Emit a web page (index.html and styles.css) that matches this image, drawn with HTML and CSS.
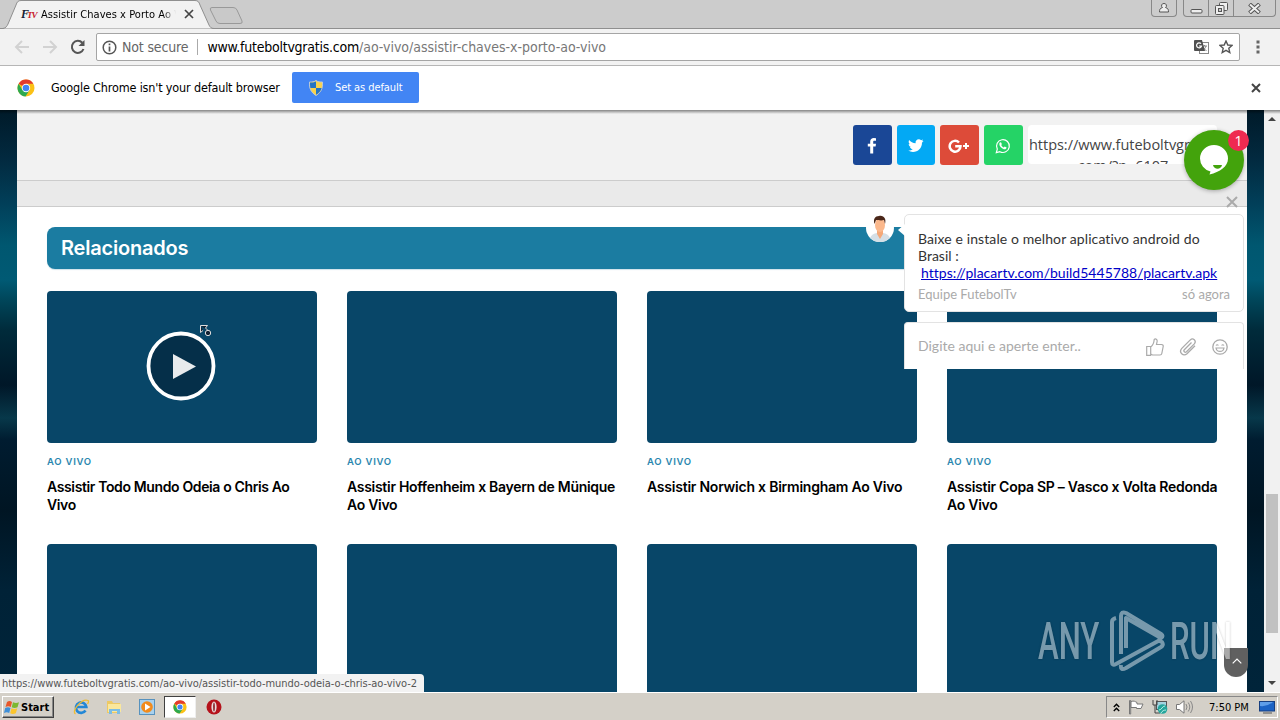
FILE: index.html
```html
<!DOCTYPE html>
<html lang="pt-BR">
<head>
  <meta charset="UTF-8">
  <meta name="viewport" content="width=device-width, initial-scale=1.0">
  <title>Assistir Chaves x Porto Ao Vivo</title>
  <link rel="stylesheet" href="styles.css">
</head>
<body>
  <svg width="0" height="0" class="defs">
    <symbol id="chrome" viewBox="0 0 18 18">
      <circle cx="9" cy="9" r="8.5" fill="#fbc116"/>
      <path d="M9 9L1.6 4.8A8.5 8.5 0 0 1 16.4 4.8L9 4.8z" fill="#e33b2e"/>
      <path d="M1.6 4.8A8.5 8.5 0 0 0 8.5 17.5L12.6 11.1 5.4 11.1z" fill="#2da94f"/>
      <circle cx="9" cy="9" r="4.2" fill="#fff"/>
      <circle cx="9" cy="9" r="3.3" fill="#4285f4"/>
    </symbol>
  </svg>

  <!-- Browser tabs -->
  <div class="tabstrip">
    <svg class="tab-shape" width="250" height="29" viewBox="0 0 250 29">
      <path d="M0 28.5H3C6 28 7 26 8 24L16 5C17 2 18 .5 21 .5H195C198 .5 199 2 200 5L209 25C210 27 211 28.5 214 28.5H250" fill="#f2f2f2" stroke="#8f8f8f"/>
      <path d="M212 7.500H233Q236 7.500 237 10L242 21Q243 23.500 240 23.500H220Q217 23.500 216 21L210.500 10Q209.500 7.500 212 7.500z" fill="#c9c9c9" stroke="#999"/>
    </svg>
    <div class="tab">
      <span class="favicon"><b>F</b><i>TV</i></span>
      <span class="tab-title">Assistir Chaves x Porto Ao V</span>
      <svg width="10" height="10" viewBox="0 0 10 10"><path d="M1 1l8 8M9 1L1 9" stroke="#444" stroke-width="1.7"/></svg>
    </div>
    <div class="window-buttons">
      <div class="win-group">
        <span class="win-btn"><svg width="12" height="12" viewBox="0 0 12 12"><path d="M6 1.500a2.200 2.200 0 0 1 1.500 4c2.500.7 3 2 3 4.500h-9c0-2.500.5-3.800 3-4.500A2.200 2.200 0 0 1 6 1.500z" fill="#eee" stroke="#555"/></svg></span>
      </div>
      <div class="win-group">
        <span class="win-btn"><svg width="13" height="12" viewBox="0 0 13 12"><rect x="1" y="7.500" width="11" height="3.500" rx="1" fill="#eee" stroke="#555"/></svg></span>
        <span class="win-btn"><svg width="13" height="13" viewBox="0 0 13 13"><rect x="4.500" y=".5" width="8" height="8" rx="1" fill="#eee" stroke="#555"/><rect x=".5" y="3.500" width="8.500" height="9" rx="1" fill="#eee" stroke="#555"/><rect x="3.500" y="6.500" width="3" height="3" fill="#ccc" stroke="#555"/></svg></span>
        <span class="win-btn wide"><svg width="13" height="11" viewBox="0 0 13 11"><path d="M1.500 1l10 9M11.500 1l-10 9" stroke="#555" stroke-width="4"/><path d="M2 1.500l9 8M11 1.500l-9 8" stroke="#eee" stroke-width="2"/></svg></span>
      </div>
    </div>
  </div>

  <!-- Address bar -->
  <div class="toolbar">
    <svg width="16" height="16" viewBox="0 0 16 16"><path d="M15 8H2M8 2L2 8l6 6" fill="none" stroke="#d2d2d2" stroke-width="2"/></svg>
    <svg width="16" height="16" viewBox="0 0 16 16"><path d="M1 8h13M8 2l6 6-6 6" fill="none" stroke="#d2d2d2" stroke-width="2"/></svg>
    <svg width="16" height="16" viewBox="0 0 16 16"><path d="M13.500 10A6 6 0 1 1 12.300 3.800" fill="none" stroke="#555" stroke-width="2"/><path d="M14.500 1v6h-6z" fill="#555"/></svg>
    <div class="omnibox">
      <svg width="15" height="15" viewBox="0 0 15 15"><circle cx="7.500" cy="7.500" r="6.300" fill="none" stroke="#555" stroke-width="1.500"/><path d="M7.500 3.500v1.800M7.500 6.500v5" stroke="#555" stroke-width="1.700"/></svg>
      <span class="not-secure">Not secure</span>
      <span class="url-host">www.futeboltvgratis.com</span><span class="url-path">/ao-vivo/assistir-chaves-x-porto-ao-vivo</span>
      <svg class="translate" width="15" height="14" viewBox="0 0 15 14"><rect x="5.500" y="2.500" width="9" height="11" fill="#fff" stroke="#888"/><path d="M8 6h5M10.500 5v1M12 6c-.5 2-2 3.500-3.500 4.500M9 7c1 2 2 3 3.500 3.500" fill="none" stroke="#888"/><path d="M1 0h7l3 11H1a1 1 0 0 1-1-1V1a1 1 0 0 1 1-1z" fill="#505050"/><path d="M7 3.700A2.500 2.500 0 1 0 7.500 6H5" fill="none" stroke="#fff" stroke-width="1.200"/></svg>
      <svg width="14" height="14" viewBox="0 0 14 14"><path d="M7 1l1.800 4 4.200.4-3.200 2.900 1 4.200L7 10.300l-3.800 2.200 1-4.200L1 5.400 5.200 5z" fill="none" stroke="#555" stroke-width="1.400"/></svg>
    </div>
    <svg class="menu-dots" width="4" height="14" viewBox="0 0 4 14"><path d="M.5.500h3v3h-3zM.5 5.500h3v3h-3zM.5 10.500h3v3h-3z" fill="#666"/></svg>
  </div>

  <!-- Default browser prompt -->
  <div class="infobar">
    <svg width="18" height="18"><use href="#chrome"/></svg>
    <span class="infobar-text">Google Chrome isn't your default browser</span>
    <div class="default-btn">
      <svg width="14" height="16" viewBox="0 0 14 16"><path d="M7 .5C9 2 11 2 13.500 2c.3 6-1 10-6.500 13.500C1.500 12 .2 8 .5 2 3 2 5 2 7 .5z" fill="#f9d34c" stroke="#bcc9d8"/><path d="M7 1.500V8H1.400C1 6 1 4.500 1 2.600 3.500 2.600 5 2.500 7 1.500zM7 8h5.600C12 11 10 13 7 14.800z" fill="#2474c4"/></svg>
      <span>Set as default</span>
    </div>
    <svg class="infobar-close" width="10" height="10" viewBox="0 0 10 10"><path d="M1 1l8 8M9 1L1 9" stroke="#444" stroke-width="2"/></svg>
  </div>

  <!-- Page -->
  <div class="viewport">
    <main class="site">
      <div class="share">
        <span class="share-btn facebook"><svg width="10" height="16" viewBox="0 0 10 16"><path d="M9 .3v2.500H7.500C6.400 2.800 6.200 3.300 6.200 4v1.700H9L8.600 8.500H6.200V15.500H3.200V8.500H.8V5.700h2.400V3.600C3.200 1.200 4.700 0 6.800 0z" fill="#fff"/></svg></span>
        <span class="share-btn twitter"><svg width="16" height="14" viewBox="0 0 16 14"><path d="M15.500 1.900c-.5.800-1 1.200-1.500 1.600.1 5.500-4 9.500-9 9.500-1.800 0-3.400-.5-4.700-1.400 1.700.1 3.200-.3 4.500-1.300-1.500-.1-2.500-1-2.900-2.200h1.300C1.700 7.700.7 6.500.7 4.900l1.400.4C.7 4.200.3 2.500 1.100.9c1.600 2 3.800 3.200 6.500 3.300C7.200 2 8.800.3 10.800.3c.9 0 1.700.4 2.300 1l2-.8c-.2.800-.7 1.300-1.300 1.700z" fill="#fff"/></svg></span>
        <span class="share-btn google"><svg width="22" height="14" viewBox="0 0 22 14"><path d="M11 3.500A5.400 5.400 0 1 0 12.500 7.200H7.200" fill="none" stroke="#fff" stroke-width="2.500"/><path d="M18 4v6M15 7h6" stroke="#fff" stroke-width="2"/></svg></span>
        <span class="share-btn whatsapp"><svg width="16" height="16" viewBox="0 0 16 16"><path d="M1.300 14.700l1-3.600A6.400 6.400 0 1 1 4.900 13.700z" fill="none" stroke="#fff" stroke-width="1.200"/><path d="M5 4.500l1-.3.900 2-.7.900c.6 1.200 1.300 1.800 2.600 2.400l.9-1 1.900 1c-.1 1.600-1.500 2-2.700 1.700C6.300 10.500 4.200 8 4.300 6c0-.7.300-1.200.7-1.500z" fill="#fff"/></svg></span>
        <div class="short-url">https://www.futeboltvgratis.<br>com/?p=6107</div>
      </div>
      <div class="divider"></div>
      <section class="related">
        <h2>Relacionados</h2>
        <div class="grid">
          <article class="card">
            <div class="thumb play">
              <svg width="70" height="70" viewBox="0 0 70 70"><circle cx="35" cy="35" r="32.500" fill="#052f49" stroke="#fff" stroke-width="3.800"/><path d="M27 23l23 12.500L27 48z" fill="#e8ebed"/></svg>
            </div>
            <span class="category">AO VIVO</span>
            <h3 class="t1">Assistir Todo Mundo Odeia o Chris Ao<br>Vivo</h3>
          </article>
          <article class="card">
            <div class="thumb"></div>
            <span class="category">AO VIVO</span>
            <h3 class="t2">Assistir Hoffenheim x Bayern de Münique<br>Ao Vivo</h3>
          </article>
          <article class="card">
            <div class="thumb"></div>
            <span class="category">AO VIVO</span>
            <h3 class="t3">Assistir Norwich x Birmingham Ao Vivo</h3>
          </article>
          <article class="card">
            <div class="thumb"></div>
            <span class="category">AO VIVO</span>
            <h3 class="t4">Assistir Copa SP – Vasco x Volta Redonda<br>Ao Vivo</h3>
          </article>
          <article class="card"><div class="thumb"></div></article>
          <article class="card"><div class="thumb"></div></article>
          <article class="card"><div class="thumb"></div></article>
          <article class="card"><div class="thumb"></div></article>
        </div>
      </section>
    </main>
    <div class="scrollbar">
      <svg width="8" height="4" viewBox="0 0 8 4"><path d="M0 4l4-4 4 4z" fill="#444"/></svg>
      <div class="scroll-thumb"></div>
      <svg width="8" height="4" viewBox="0 0 8 4"><path d="M0 0l4 4 4-4z" fill="#444"/></svg>
    </div>

    <!-- Chat widget -->
    <div class="chat-launcher">
      <svg width="30" height="32" viewBox="0 0 30 32"><path d="M15 1a14 13.500 0 0 1 14 13.500c0 8-8 13.500-18.500 16l1-3A14 13.500 0 0 1 1 14.500 14 13.500 0 0 1 15 1z" fill="#fff"/><path d="M14 21h9c-1 5-8 5-9 0z" fill="#43a30c"/></svg>
      <span class="chat-count">1</span>
    </div>
    <svg class="chat-close" width="12" height="12" viewBox="0 0 12 12"><path d="M1 1l10 10M11 1L1 11" stroke="#aaa" stroke-width="2"/></svg>
    <svg class="avatar" width="28" height="28" viewBox="0 0 28 28">
      <circle cx="14" cy="14" r="14" fill="#fff"/>
      <path d="M4 24c1-3 4-4.500 7-5h6c3 .5 6 2 7 5a14 14 0 0 1-20 0z" fill="#d5dfe6"/>
      <path d="M11 15h6v5l-3 5-3-5z" fill="#f5a878"/>
      <ellipse cx="14" cy="11" rx="5" ry="7" fill="#fbb88c"/>
      <path d="M8.500 10C7 5 9 2 13 2c5-1 7.500 3 6 8l-1-4c-3 1-6 0-8 0z" fill="#4a2719"/>
    </svg>
    <div class="chat-message">
      <p class="m1">Baixe e instale o melhor aplicativo android do</p>
      <p class="m2">Brasil :</p>
      <p class="m3"><a>https://placartv.com/build5445788/placartv.apk</a></p>
      <div class="chat-meta"><span>Equipe FutebolTv</span><span class="time">só agora</span></div>
    </div>
    <div class="chat-input">
      <span>Digite aqui e aperte enter..</span>
      <svg width="18" height="18" viewBox="0 0 18 18"><path d="M.7 8.500h4v8.800h-4zM4.700 9c2-1.500 3.200-3.500 3.500-7.500 1-1 3-.5 3 1.500L10.500 6.500h5c1.500 0 1.800 1 1.700 2l-1.400 7c-.2 1-.8 1.500-1.800 1.500H6.500l-1.800-1z" fill="none" stroke="#aaa" stroke-width="1.200"/></svg>
      <svg width="18" height="18" viewBox="0 0 18 18"><path d="M12.500 4.500L5.300 11.700c-1.300 1.500.7 3.500 2.200 2.100l7.800-7.900c2.600-3-1.300-6.500-4-4L2.800 10.400c-3.400 3.800 1.400 8.500 5.200 5.300l8-8" fill="none" stroke="#aaa" stroke-width="1.300"/></svg>
      <svg width="16" height="16" viewBox="0 0 16 16"><circle cx="8" cy="8" r="7.200" fill="none" stroke="#aaa" stroke-width="1.300"/><path d="M4 6.500q1.200-1.500 2.400 0M9.600 6.500q1.200-1.500 2.400 0M4 9h8c-.8 4.500-7.200 4.500-8 0z" fill="none" stroke="#aaa" stroke-width="1.200"/></svg>
    </div>

    <div class="to-top"><svg width="10" height="6" viewBox="0 0 10 6"><path d="M.7 5.300L5 1l4.300 4.300" fill="none" stroke="#fff" stroke-width="1.200"/></svg></div>
    <div class="watermark">
      <span>ANY</span>
      <svg width="56" height="62" viewBox="0 0 56 62"><path d="M6 8Q2 9 2 12V52Q2 56 6 54L50 30M11 44V6Q11 1 16 3L51 24Q54 26 51 28L16 8V38M11 55Q10 61 16 58L51 37Q54 35 52 32L47 30" fill="none" stroke="#fff" stroke-width="4" stroke-linejoin="round"/></svg>
      <span>RUN</span>
    </div>
    <div class="status-bubble"><span>https://www.futeboltvgratis.com/ao-vivo/assistir-todo-mundo-odeia-o-chris-ao-vivo-2</span></div>
    <svg class="cursor" width="12" height="12" viewBox="0 0 12 12"><path d="M.5.500h7L5.500 3l3 3M.5.500v7L3 5.500" fill="#123" stroke="#ddd"/><circle cx="8" cy="8" r="2.700" fill="#123" stroke="#ddd"/></svg>
  </div>

  <!-- Taskbar -->
  <div class="taskbar">
    <div class="start">
      <svg width="16" height="15" viewBox="0 0 16 15"><path d="M3 2c2-1.500 3.500-1 5 0L6.800 7C5 6 3.500 6 1.500 7z" fill="#e8572a"/><path d="M9 2.300c2 1 4 1 6 0l-1.500 5c-2 1-4 1-5.800 0z" fill="#7cb82f"/><path d="M1.200 8c2-1 3.500-1 5.300 0l-1.300 5C3.500 12 2 12 0 13z" fill="#3f8fd8"/><path d="M7.500 8.300c2 1 4 1 5.800 0l-1.500 5c-2 1-4 1-5.600 0z" fill="#fbc52d"/></svg>
      <span>Start</span>
    </div>
    <div class="tasks">
      <span class="task"><svg width="16" height="16" viewBox="0 0 16 16"><path d="M12.500 11.500A5.200 5.200 0 1 1 13.300 8H4" fill="none" stroke="#2387d6" stroke-width="2.700"/><path d="M2.500 15C-2 12 9-1 15 1.500c1 .5.500 2-.5 3.500" fill="none" stroke="#eebc35" stroke-width="1.300"/></svg></span>
      <span class="task"><svg width="16" height="16" viewBox="0 0 16 16"><path d="M1 2h5l1 2h7v10H1z" fill="#edc964"/><path d="M2 5h13v8H2z" fill="#fae79c"/><path d="M3 10h11v5h-3v-3H6v3H3z" fill="#7cbde4"/></svg></span>
      <span class="task"><svg width="16" height="16" viewBox="0 0 16 16"><rect x=".5" y=".5" width="15" height="15" fill="#a8d1ee" stroke="#5792be"/><circle cx="8" cy="8" r="5.800" fill="#f28b1c"/><path d="M6 4.500L11.500 8 6 11.500z" fill="#fff"/></svg></span>
      <span class="task active"><svg width="14" height="14"><use href="#chrome"/></svg></span>
      <span class="task"><svg width="16" height="16" viewBox="0 0 16 16"><circle cx="8" cy="8" r="7.500" fill="#b5121b"/><ellipse cx="8" cy="8" rx="2.600" ry="5.500" fill="#e9dddd"/><ellipse cx="8" cy="8" rx=".8" ry="4.500" fill="#821018"/></svg></span>
    </div>
    <div class="tray">
      <svg width="7" height="9" viewBox="0 0 7 9"><path d="M.8 4L3.500 1.300 6.200 4M.8 8l2.700-2.700L6.200 8" fill="none" stroke="#000" stroke-width="1.400"/></svg>
      <svg width="16" height="16" viewBox="0 0 16 16"><path d="M1.500 15V1.500h1.200V15z" fill="#fff" stroke="#777"/><path d="M3 2.500c3-1 4 0 6 1v1.500h6l-2 4.500H8.500V8.500H3z" fill="#fff" stroke="#777"/></svg>
      <svg width="16" height="16" viewBox="0 0 16 16"><rect x="4.500" y="2.500" width="10" height="8" fill="#a4d3e0" stroke="#555"/><path d="M1 1v5h4V1M3 6v8h5" fill="none" stroke="#444"/><circle cx="10.500" cy="10" r="4.800" fill="#24a59c"/><path d="M7 11c3 0 3-4 6-4M9 14c1-2 3-3 5-3" fill="none" stroke="#b7f0e5"/></svg>
      <svg width="17" height="14" viewBox="0 0 17 14"><path d="M.5 4.500h3L8 .800v12.400L3.500 9.500h-3z" fill="#fff" stroke="#777"/><path d="M10 4q2 3 0 6M12.200 2.500q3.200 4.500 0 9M14.500 1q4 6 0 12" fill="none" stroke="#888"/></svg>
      <span class="clock">7:50 PM</span>
      <svg width="16" height="14" viewBox="0 0 16 14"><rect x=".5" y="1.500" width="15" height="9.500" fill="#1c63c4" stroke="#173f80"/><path d="M1 6Q8 7 14 2H1z" fill="#5f9ee8"/><path d="M4 13h9" stroke="#555"/></svg>
    </div>
  </div>
</body>
</html>
```
FILE: styles.css
```css
* {
  box-sizing: border-box;
}
body {
  margin: 0;
  width: 1280px;
  height: 720px;
  overflow: hidden;
  display: flex;
  flex-direction: column;
  font-family: "DejaVu Sans Condensed", "DejaVu Sans", sans-serif;
  font-size: 11px;
  color: #000;
}
svg {
  flex: none;
  display: block;
}
span, p, h2, h3 {
  white-space: nowrap;
}
.defs {
  position: absolute;
}

/* Tabs */
.tabstrip {
  height: 29px;
  flex: none;
  background: #ccc;
  border-bottom: 1px solid #8f8f8f;
  display: flex;
  justify-content: space-between;
  position: relative;
}
.tab-shape {
  position: absolute;
  left: 0;
  top: 0;
}
.tab {
  position: relative;
  display: flex;
  align-items: center;
  width: 194px;
  padding-left: 21px;
}
.favicon {
  width: 20px;
  font-family: "Liberation Serif", serif;
  font-size: 12px;
  font-style: italic;
  letter-spacing: -2px;
  color: #123;
}
.favicon i {
  font-size: 9px;
  font-weight: bold;
  letter-spacing: -1px;
  color: #c8202a;
}
.tab-title {
  width: 136px;
  margin-right: 7px;
  overflow: hidden;
  letter-spacing: .05px;
  -webkit-mask-image: linear-gradient(90deg, #000 122px, transparent 135px);
  mask-image: linear-gradient(90deg, #000 122px, transparent 135px);
}
.window-buttons {
  display: flex;
  gap: 6px;
  padding-right: 4px;
}
.win-group {
  display: flex;
  height: 17px;
  border: 1px solid #888;
  border-top: 0;
  border-radius: 0 0 4px 4px;
}
.win-btn {
  width: 24px;
  display: flex;
  align-items: center;
  justify-content: center;
}
.win-btn + .win-btn {
  width: 25px;
  border-left: 1px solid #888;
}
.win-btn + .wide {
  width: 42px;
}

/* Toolbar */
.toolbar {
  height: 37px;
  flex: none;
  background: #f2f2f2;
  border-bottom: 1px solid #b6b6b6;
  display: flex;
  align-items: center;
  gap: 12px;
  padding-left: 14px;
}
.omnibox {
  width: 1144px;
  height: 28px;
  margin-left: -2px;
  background: #fff;
  border: 1px solid #a5a5a5;
  border-radius: 2px;
  display: flex;
  align-items: center;
  padding: 0 6px 0 5px;
  font-size: 14px;
}
.not-secure {
  color: #666;
  margin-left: 5px;
  padding-right: 9px;
  margin-right: 9px;
  border-right: 1px solid #aaa;
  line-height: 16px;
  letter-spacing: -.15px;
}
.url-host {
  letter-spacing: -.24px;
}
.url-path {
  color: #777;
  letter-spacing: -.02px;
}
.translate {
  margin-left: auto;
  margin-right: 10px;
}
.menu-dots {
  margin-left: 4px;
}

/* Infobar */
.infobar {
  height: 44px;
  flex: none;
  background: #fff;
  display: flex;
  align-items: center;
  padding: 0 19px 1px 17px;
  font-size: 12.5px;
}
.infobar-text {
  margin-left: 16px;
  width: 241px;
  letter-spacing: -.16px;
}
.default-btn {
  width: 127px;
  height: 31px;
  background: #4285f4;
  border-radius: 2px;
  color: #fff;
  display: flex;
  align-items: center;
  padding-left: 17px;
  gap: 12px;
  font-size: 11px;
  letter-spacing: -.08px;
}
.infobar-close {
  margin-left: auto;
}

/* Page */
.viewport {
  position: relative;
  height: 582px;
  flex: none;
  overflow: hidden;
  display: flex;
  background: linear-gradient(#001a29 0, #022a40 50px, #01405a 95px, #005770 135px, #005a74 170px, #00465a 190px, #002b3b 220px, #001728 275px, #07384a 308px, #001c30 330px, #001523 400px, #002237 480px, #00243a 582px);
}
.viewport::before {
  content: "";
  position: absolute;
  top: 0;
  left: 0;
  right: 0;
  height: 4px;
  background: linear-gradient(rgba(0, 0, 0, .45), transparent);
  z-index: 1;
}
.site {
  width: 1230px;
  margin-left: 17px;
  background: #fff;
}
.share {
  height: 71px;
  background: #f2f2f2;
  border-bottom: 1px solid #ccc;
  display: flex;
  justify-content: flex-end;
  gap: 5px;
  padding: 15px 30px 0 0;
}
.share-btn {
  width: 39px;
  height: 40px;
  border-radius: 3px;
  padding: 1px 1px 0 0;
  display: flex;
  align-items: center;
  justify-content: center;
}
.facebook {
  background: #1a4796;
}
.twitter {
  background: #03a9f4;
  width: 38px;
}
.google {
  background: #dd4b39;
}
.whatsapp {
  background: #25d366;
}
.short-url {
  width: 189px;
  height: 39px;
  overflow: hidden;
  background: #fff;
  border-radius: 4px;
  padding: 9px 0 0 1px;
  text-align: center;
  font-family: "Open Sans", sans-serif;
  font-size: 14.5px;
  line-height: 21px;
  letter-spacing: -.03px;
  color: #444;
}
.divider {
  height: 26px;
  background: #eaeaea;
  border-bottom: 1px solid #ccc;
}
.related {
  padding: 20px 30px 0;
}
.related h2 {
  margin: 0 0 22px;
  height: 42px;
  line-height: 43px;
  padding-left: 14px;
  border-radius: 8px;
  background: #1b7ca1;
  box-shadow: 0 1px 1px #cfe2ea;
  color: #fff;
  font-family: Inter, sans-serif;
  font-weight: 600;
  font-size: 20px;
  letter-spacing: -.2px;
}
.grid {
  display: grid;
  grid-template-columns: repeat(4, 270px);
  grid-auto-rows: 223px;
  gap: 30px;
}
.thumb {
  height: 152px;
  border-radius: 4px;
  background: #084668;
  display: flex;
  align-items: center;
  justify-content: center;
}
.thumb.play {
  padding: 0 2px 2px 0;
}
.category {
  display: block;
  margin-top: 12px;
  height: 15px;
  line-height: 14px;
  font-family: Inter, sans-serif;
  font-weight: 600;
  font-size: 9.5px;
  letter-spacing: .75px;
  color: #2a86ae;
}
.card h3 {
  margin: 8px 0 0;
  font-family: Inter, sans-serif;
  font-weight: 600;
  font-size: 14px;
  line-height: 18px;
}
.card .t1 {
  letter-spacing: -.37px;
}
.card .t2 {
  letter-spacing: -.29px;
}
.card .t3 {
  letter-spacing: -.23px;
}
.card .t4 {
  letter-spacing: -.27px;
}

/* Scrollbar */
.scrollbar {
  width: 16px;
  margin-left: auto;
  background: #f1f1f1;
  display: flex;
  flex-direction: column;
  align-items: center;
  padding: 7px 0;
}
.scroll-thumb {
  width: 12px;
  height: 139px;
  margin: 373px 0 auto;
  background: #c1c1c1;
}

/* Chat */
.chat-launcher {
  position: absolute;
  left: 1184px;
  top: 20px;
  width: 60px;
  height: 60px;
  border-radius: 50%;
  background: #43a30c;
  box-shadow: 0 1px 4px rgba(0, 0, 0, .3);
  display: flex;
  align-items: center;
  justify-content: center;
}
.chat-count {
  position: absolute;
  right: -5px;
  top: 0;
  width: 21px;
  height: 21px;
  border-radius: 50%;
  background: #ef2a51;
  color: #fff;
  font: 14px/21px "Open Sans", sans-serif;
  text-align: center;
}
.chat-close {
  position: absolute;
  left: 1226px;
  top: 86px;
}
.avatar {
  position: absolute;
  left: 866px;
  top: 104px;
}
.chat-message, .chat-input {
  position: absolute;
  left: 904px;
  width: 340px;
  background: #fff;
  border: 1px solid #e3e3e3;
  font-family: Lato, sans-serif;
  font-size: 14px;
}
.chat-message {
  top: 104px;
  height: 98px;
  border-radius: 5px;
  padding: 15px 13px 0;
  color: #333;
}
.chat-message::before {
  content: "";
  position: absolute;
  left: -7px;
  top: 9px;
  border: 6px solid transparent;
  border-left: 0;
  border-right: 7px solid #fff;
}
.chat-message p {
  margin: 0;
  line-height: 17px;
}
.chat-message a {
  color: #0000c8;
  text-decoration: underline;
}
.chat-message .m1 {
  letter-spacing: .1px;
}
.chat-message .m3 {
  padding-left: 3px;
  letter-spacing: .02px;
}
.chat-meta {
  display: flex;
  justify-content: space-between;
  margin-top: 5px;
  line-height: 17px;
  font-size: 13px;
  color: #aaa;
}
.chat-input {
  top: 212px;
  height: 47px;
  border-bottom: 0;
  border-radius: 4px 4px 0 0;
  display: flex;
  align-items: center;
  gap: 15px;
  padding: 2px 15px 0 13px;
  color: #aaa;
}
.chat-input span {
  flex: 1;
  padding-bottom: 3px;
}

/* Overlays */
.to-top {
  position: absolute;
  left: 1224px;
  top: 538px;
  width: 24px;
  height: 29px;
  padding: 0 0 3px 1px;
  border-radius: 0 0 12px 12px;
  background: #606060;
  display: flex;
  align-items: center;
  justify-content: center;
}
.watermark {
  position: absolute;
  left: 1038px;
  top: 501px;
  height: 62px;
  display: flex;
  align-items: center;
  opacity: .45;
  color: #fff;
  font-family: Roboto, sans-serif;
  font-weight: 500;
  font-size: 51px;
  text-shadow: 0 0 3px rgba(0, 0, 0, .5);
}
.watermark span {
  width: 63px;
  line-height: 62px;
  transform: scaleX(.61);
  transform-origin: left;
}
.watermark svg {
  margin: 0 4px 2px 9px;
}
.status-bubble {
  position: absolute;
  left: 0;
  bottom: 0;
  width: 424px;
  height: 18px;
  background: #f2f2f2;
  border-radius: 0 4px 0 0;
  padding-left: 2px;
  line-height: 19px;
  letter-spacing: -.04px;
  color: #555;
}
.cursor {
  position: absolute;
  left: 200px;
  top: 215px;
}

/* Taskbar */
.taskbar {
  height: 28px;
  flex: none;
  background: #d4d0c8;
  border-top: 1px solid #fff;
  display: flex;
  align-items: center;
  padding: 1px 2px 0;
}
.start {
  width: 52px;
  height: 22px;
  border: 1px solid;
  border-color: #fff #404040 #404040 #fff;
  box-shadow: inset -1px -1px #888;
  display: flex;
  align-items: center;
  gap: 1px;
  padding-left: 1px;
  font-weight: bold;
}
.tasks {
  display: flex;
  align-items: center;
  margin-left: 10px;
}
.task {
  width: 33px;
  height: 22px;
  display: flex;
  align-items: center;
  justify-content: center;
}
.task.active {
  width: 32px;
  margin: 0 1px;
  background: #fff;
  border: 1px solid;
  border-color: #404040 #eee #eee #404040;
}
.tray {
  margin-left: auto;
  width: 172px;
  height: 22px;
  border: 1px solid;
  border-color: #888 #fff #fff #888;
  display: flex;
  align-items: center;
  padding-left: 6px;
  gap: 8px;
}
.clock {
  margin-left: 8px;
  margin-right: 2px;
}
```
